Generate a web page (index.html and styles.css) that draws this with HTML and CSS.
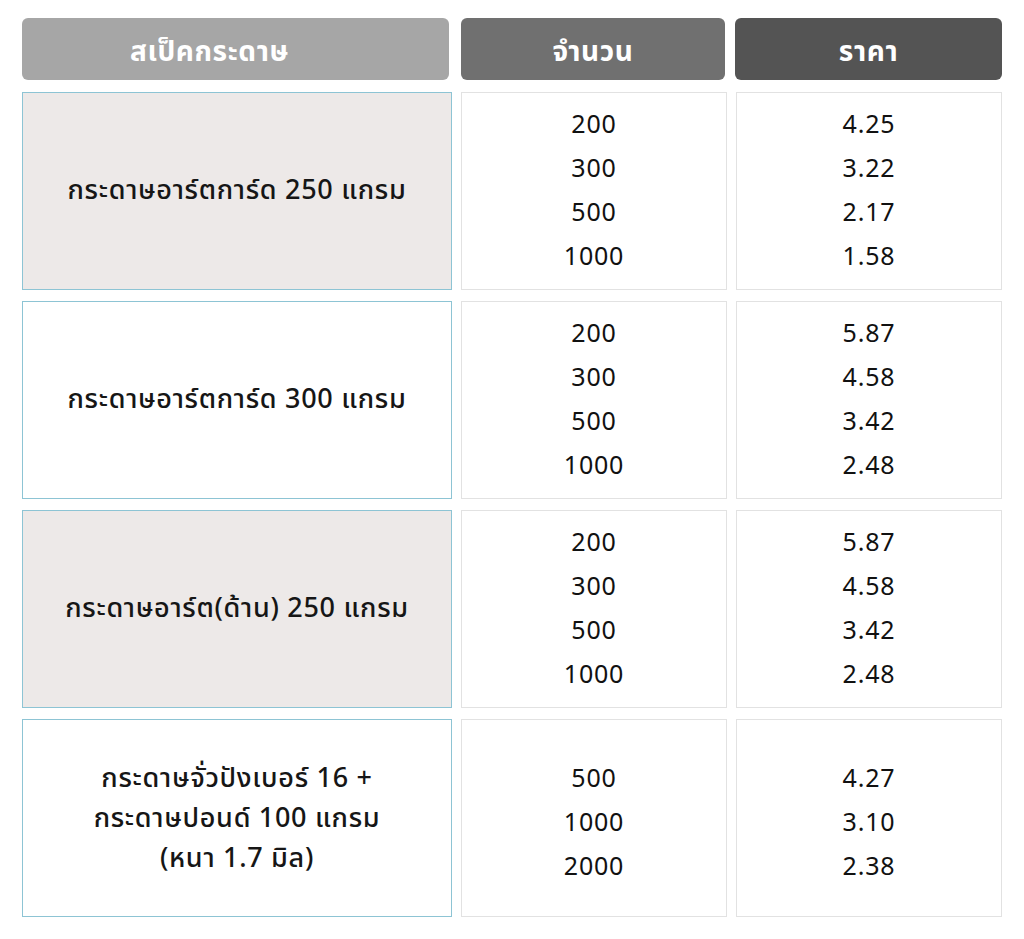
FILE: index.html
```html
<!DOCTYPE html>
<html lang="th">
<head>
<meta charset="utf-8">
<title>ราคากระดาษ</title>
<link rel="stylesheet" href="styles.css">
</head>
<body>
<div class="table">
  <div class="head h1">สเป็คกระดาษ</div>
  <div class="head h2">จำนวน</div>
  <div class="head h3">ราคา</div>

  <div class="spec shade">กระดาษอาร์ตการ์ด 250 แกรม</div>
  <div class="cell"><span>200</span><span>300</span><span>500</span><span>1000</span></div>
  <div class="cell"><span>4.25</span><span>3.22</span><span>2.17</span><span>1.58</span></div>

  <div class="spec">กระดาษอาร์ตการ์ด 300 แกรม</div>
  <div class="cell"><span>200</span><span>300</span><span>500</span><span>1000</span></div>
  <div class="cell"><span>5.87</span><span>4.58</span><span>3.42</span><span>2.48</span></div>

  <div class="spec shade">กระดาษอาร์ต(ด้าน) 250 แกรม</div>
  <div class="cell"><span>200</span><span>300</span><span>500</span><span>1000</span></div>
  <div class="cell"><span>5.87</span><span>4.58</span><span>3.42</span><span>2.48</span></div>

  <div class="spec multi">กระดาษจั่วปังเบอร์ 16 +<br>กระดาษปอนด์ 100 แกรม<br>(หนา 1.7 มิล)</div>
  <div class="cell three"><span>500</span><span>1000</span><span>2000</span></div>
  <div class="cell three"><span>4.27</span><span>3.10</span><span>2.38</span></div>
</div>
</body>
</html>
```

FILE: styles.css
```css
html, body {
  margin: 0;
  padding: 0;
  background: #ffffff;
}
body {
  font-family: "Noto Sans Thai", "Loma", "Garuda", "Noto Sans", "DejaVu Sans", sans-serif;
  color: #111111;
}
.table {
  display: grid;
  grid-template-columns: 430px 266px 266px;
  grid-template-rows: 63px repeat(4, 198px);
  column-gap: 9px;
  row-gap: 11px;
  padding: 18px 0 0 22px;
}
.head {
  display: flex;
  align-items: center;
  justify-content: center;
  border-radius: 6px;
  color: #ffffff;
  font-size: 28px;
  font-weight: 700;
  letter-spacing: 0.6px;
  margin-bottom: 1px;
  padding-top: 7px;
  box-sizing: border-box;
}
.h1 { background: #a6a6a6; margin-right: 3px; padding-right: 52px; }
.h2 { background: #707070; margin-right: 2px; }
.h3 { background: #545454; margin-left: -1px; }
.spec {
  display: flex;
  align-items: center;
  justify-content: center;
  text-align: center;
  border: 1px solid #8dc4d4;
  background: #ffffff;
  font-size: 27px;
  font-weight: 500;
  letter-spacing: 0.7px;
  line-height: 40px;
  color: #161616;
  box-sizing: border-box;
}
.spec.shade { background: #ede9e8; }
.spec.multi { padding-top: 2px; }
.cell {
  display: flex;
  flex-direction: column;
  align-items: center;
  justify-content: center;
  border: 1px solid #e2e2e2;
  background: #ffffff;
  font-size: 25px;
  letter-spacing: 0.8px;
  line-height: 44px;
  box-sizing: border-box;
}
.cell.three { padding-top: 10px; }
```
